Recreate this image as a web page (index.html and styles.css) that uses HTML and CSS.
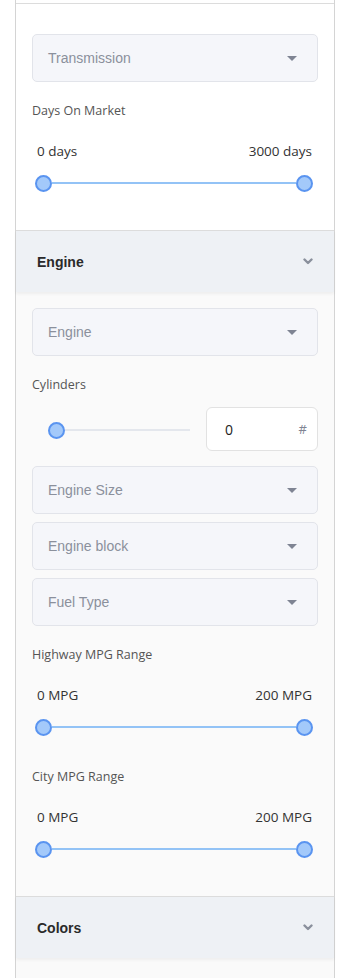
FILE: index.html
```html
<!DOCTYPE html>
<html lang="en">
<head>
  <meta charset="UTF-8" />
  <meta name="viewport" content="width=device-width, initial-scale=1.0"/>
  <title>Filters</title>
  <link rel="stylesheet" href="styles.css">
</head>
<body>
  <div class="filters">
    <!-- end of previous section -->
    <div class="section-tail"></div>

    <div class="section-body plain">
      <div class="select"><span>Transmission</span><i class="caret"></i></div>

      <div class="field-label">Days On Market</div>
      <div class="range-values"><span>0 days</span><span>3000 days</span></div>
      <div class="range">
        <span class="thumb"></span><span class="track"></span><span class="thumb"></span>
      </div>
    </div>

    <!-- Engine -->
    <div class="section-head">
      <span>Engine</span>
      <svg class="chevron" width="10" height="7" viewBox="0 0 10 7"><polyline points="1.5,1.5 5,5 8.5,1.5" /></svg>
    </div>
    <div class="section-body">
      <div class="select"><span>Engine</span><i class="caret"></i></div>

      <div class="field-label">Cylinders</div>
      <div class="cyl-row">
        <div class="range single">
          <span class="thumb"></span><span class="track"></span>
        </div>
        <div class="num-input"><span>0</span><span class="hash">#</span></div>
      </div>

      <div class="select-stack">
        <div class="select"><span>Engine Size</span><i class="caret"></i></div>
        <div class="select"><span>Engine block</span><i class="caret"></i></div>
        <div class="select"><span>Fuel Type</span><i class="caret"></i></div>
      </div>

      <div class="field-label">Highway MPG Range</div>
      <div class="range-values"><span>0 MPG</span><span>200 MPG</span></div>
      <div class="range">
        <span class="thumb"></span><span class="track"></span><span class="thumb"></span>
      </div>

      <div class="field-label gap-lg">City MPG Range</div>
      <div class="range-values"><span>0 MPG</span><span>200 MPG</span></div>
      <div class="range">
        <span class="thumb"></span><span class="track"></span><span class="thumb"></span>
      </div>
    </div>

    <!-- Colors -->
    <div class="section-head">
      <span>Colors</span>
      <svg class="chevron" width="10" height="7" viewBox="0 0 10 7"><polyline points="1.5,1.5 5,5 8.5,1.5" /></svg>
    </div>
    <div class="section-body rest"></div>
  </div>
</body>
</html>
```

FILE: styles.css
```css
* {
  box-sizing: border-box;
}

body {
  margin: 0;
  background-color: #fff;
  font-family: 'Liberation Sans', Arial, sans-serif;
  color: #222;
}

.filters {
  width: 320px;
  margin-left: 15px;
  border-left: 1px solid #d4d4d4;
  border-right: 1px solid #d4d4d4;
  min-height: 978px;
  display: flex;
  flex-direction: column;
}

.section-tail {
  height: 4px;
  border-bottom: 1px solid #dcdcdc;
}

.section-body {
  background-color: #fafafa;
  padding: 16px 16px 39px;
}

.section-body.plain {
  background-color: #fff;
  padding-top: 30px;
}

.section-body.rest {
  flex: 1;
  padding: 0;
}

.section-head {
  position: relative;
  z-index: 1;
  height: 62px;
  border-top: 1px solid #dcdcdc;
  background-color: #eef1f5;
  box-shadow: 0 2px 3px rgba(0, 0, 0, 0.05);
  display: flex;
  align-items: center;
  justify-content: space-between;
  padding: 0 21px 0 21px;
  font-size: 14px;
  font-weight: 700;
  color: #2a2a2a;
}

.chevron polyline {
  fill: none;
  stroke: #8a909c;
  stroke-width: 2.4;
  stroke-linecap: round;
  stroke-linejoin: round;
}

.select {
  height: 48px;
  border: 1px solid #e2e4ea;
  border-radius: 5px;
  background-color: #f5f6fa;
  display: flex;
  align-items: center;
  justify-content: space-between;
  padding: 0 20px 0 15px;
  font-size: 14px;
  color: #8b909c;
}

.caret {
  width: 0;
  height: 0;
  border-left: 5px solid transparent;
  border-right: 5px solid transparent;
  border-top: 5px solid #7f8493;
}

.select-stack {
  margin-top: 15px;
  display: flex;
  flex-direction: column;
  gap: 8px;
}

.field-label {
  margin-top: 20px;
  font-family: 'Open Sans', sans-serif;
  font-size: 12.5px;
  line-height: 18px;
  color: #555;
}

.field-label.gap-lg {
  margin-top: 33px;
}

.range-values {
  margin-top: 21px;
  display: flex;
  justify-content: space-between;
  padding: 0 6px 0 5px;
  font-family: 'Open Sans', sans-serif;
  font-size: 13.5px;
  line-height: 20px;
  color: #333;
}

.range {
  margin-top: 14px;
  height: 16px;
  display: flex;
  align-items: center;
  padding: 0 5px 0 3px;
}

.thumb {
  width: 17px;
  height: 17px;
  flex: none;
  border-radius: 50%;
  border: 2px solid #5a94f0;
  background-color: #a3c9fa;
}

.track {
  flex: 1;
  height: 2px;
  background-color: #93c3f6;
}

.cyl-row {
  margin-top: 13px;
  display: flex;
  align-items: center;
  gap: 16px;
}

.range.single {
  flex: 1;
  margin-top: 2px;
  padding: 0 0 0 16px;
}

.range.single .track {
  background-color: #e4e7ed;
}

.num-input {
  width: 112px;
  height: 44px;
  border: 1px solid #e2e2e2;
  border-radius: 6px;
  background-color: #fff;
  display: flex;
  align-items: center;
  justify-content: space-between;
  padding: 0 10px 0 18px;
  font-family: 'Open Sans', sans-serif;
  font-size: 14px;
  color: #222;
}

.num-input .hash {
  font-size: 13px;
  color: #7f8493;
}
```
